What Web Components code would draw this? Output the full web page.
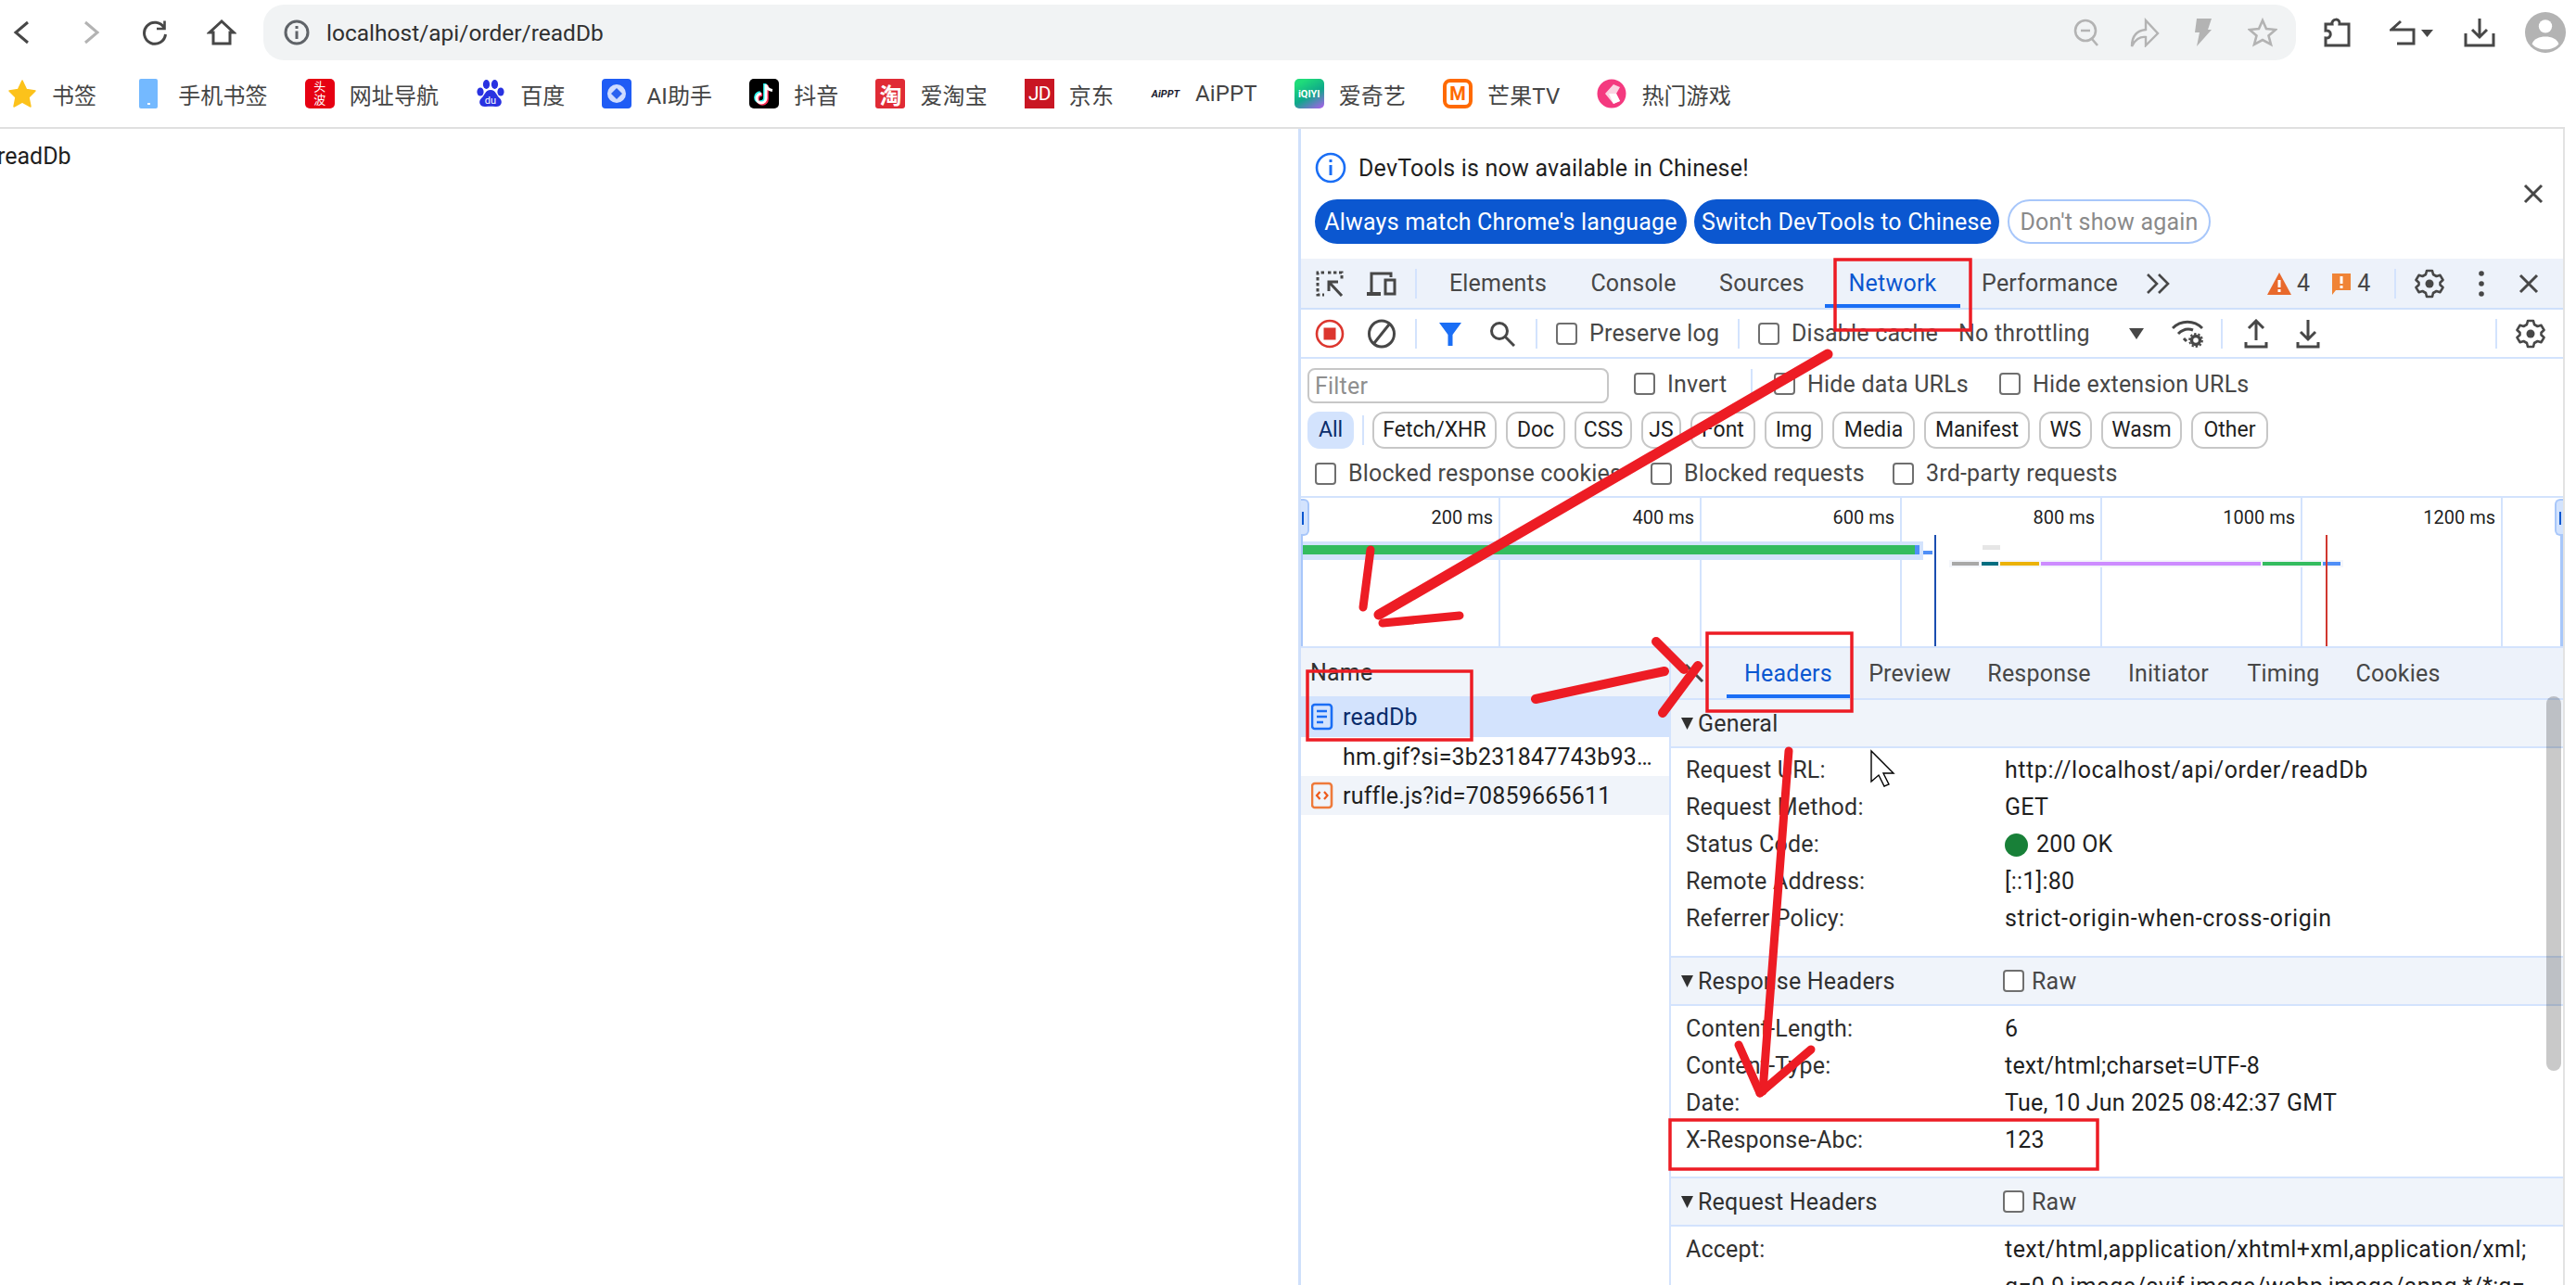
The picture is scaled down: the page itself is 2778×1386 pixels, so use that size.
<!DOCTYPE html>
<html>
<head>
<meta charset="utf-8">
<title>readDb</title>
<style>
    html, body { margin: 0; padding: 0; background: #fff; }
    body {
        width: 2778px;
        height: 1386px;
        position: relative;
        overflow: hidden;
        font-family: Roboto, "Noto Sans CJK SC", sans-serif;
        font-size: 24px;
        color: #1f1f1f;
    }
    .main { display: flex; width: 2766px; height: 1247px; }
    .page-text { flex: 0 0 1400px; padding-top: 14px; text-indent: -3px; line-height: 32px; font-size: 25px; overflow: hidden; }
</style>
</head>
<body>
<browser-toolbar></browser-toolbar>
<bookmark-bar>
    <bookmark-item icon="star">书签</bookmark-item>
    <bookmark-item icon="phone">手机书签</bookmark-item>
    <bookmark-item icon="toutiao">网址导航</bookmark-item>
    <bookmark-item icon="baidu">百度</bookmark-item>
    <bookmark-item icon="aihelp">AI助手</bookmark-item>
    <bookmark-item icon="douyin">抖音</bookmark-item>
    <bookmark-item icon="taobao">爱淘宝</bookmark-item>
    <bookmark-item icon="jd">京东</bookmark-item>
    <bookmark-item icon="aippt">AiPPT</bookmark-item>
    <bookmark-item icon="iqiyi">爱奇艺</bookmark-item>
    <bookmark-item icon="mango">芒果TV</bookmark-item>
    <bookmark-item icon="game">热门游戏</bookmark-item>
</bookmark-bar>
<div class="main">
    <div class="page-text">readDb</div>
    <devtools-panel></devtools-panel>
</div>
<ink-overlay></ink-overlay>

<script>
const G = "#474747";
const L = "#b3b3b3";

// every icon the page uses, drawn at its real pixel size
const ICONS = {
    back: `<svg width="20" height="26" viewBox="0 0 20 26" fill="none" stroke="${G}" stroke-width="3"><path d="M17 2 L4 13 L17 24"/></svg>`,
    forward: `<svg width="20" height="26" viewBox="0 0 20 26" fill="none" stroke="${L}" stroke-width="3"><path d="M3 2 L16 13 L3 24"/></svg>`,
    reload: `<svg width="28" height="28" viewBox="0 0 28 28" fill="none" stroke="${G}" stroke-width="3"><path d="M24 9 A11.5 11.5 0 1 0 25.5 16"/><path d="M24.5 1.5 V10 H16" stroke-width="2.6"/></svg>`,
    home: `<svg width="32" height="28" viewBox="0 0 32 28" fill="none" stroke="${G}" stroke-width="3"><path d="M16 2 L3 14 H7 V26 H25 V14 H29 Z" stroke-linejoin="miter"/></svg>`,
    info: `<svg width="28" height="28" viewBox="0 0 28 28" fill="none" stroke="#5f6368" stroke-width="3"><circle cx="14" cy="14" r="12"/><path d="M14 12.5 V21 M14 7 V10"/></svg>`,
    zoomout: `<svg width="28" height="30" viewBox="0 0 28 30" fill="none" stroke="${L}" stroke-width="2.6"><circle cx="13" cy="13" r="11"/><path d="M8 13 H18 M20 22 L26 29"/></svg>`,
    share: `<svg width="32" height="32" viewBox="0 0 32 32" fill="none" stroke="${L}" stroke-width="2.4"><path d="M2 31 C2 20 7 14 17 13 V3 L30 17 L17 30 V21 C11 20 5 24 2 31 Z"/></svg>`,
    flash: `<svg width="20" height="30" viewBox="0 0 20 30" fill="${L}"><path d="M3 0 H19 L15 12 H19 L3 30 L6 15 H1 Z"/></svg>`,
    staro: `<svg width="32" height="32" viewBox="0 0 32 32" fill="none" stroke="${L}" stroke-width="2.6"><path d="M16 3 L20 12 L30 13 L22.5 19.5 L25 29 L16 24 L7 29 L9.5 19.5 L2 13 L12 12 Z"/></svg>`,
    puzzle: `<svg width="30" height="32" viewBox="0 0 30 32" fill="none" stroke="${G}" stroke-width="3"><path d="M2 7 H9 C8 1 18 0 17 7 H27 V30 H2 V22 C9 23 9 13 2 14 Z"/></svg>`,
    undo: `<svg width="48" height="30" viewBox="0 0 48 30" fill="none" stroke="${G}" stroke-width="3"><path d="M12 3 L2 12 H26 V27 H8"/><path d="M34 12 H47 L40.5 20 Z" fill="${G}" stroke="none"/></svg>`,
    dload: `<svg width="34" height="32" viewBox="0 0 34 32" fill="none" stroke="${G}" stroke-width="3"><path d="M17 1 V20 M9 13 L17 21 L25 13"/><path d="M2 17 V30 H32 V17"/></svg>`,
    avatar: `<svg width="44" height="44" viewBox="0 0 46 46"><circle cx="23" cy="23" r="23" fill="${L}"/><circle cx="23" cy="16" r="7.5" fill="#fff"/><path d="M8 36 C11 25 35 25 38 36 C32 44 14 44 8 36 Z" fill="#fff"/></svg>`,

    star: `<svg width="32" height="32" viewBox="0 0 32 32"><path d="M16 2 L20.5 11.5 L30 13 L23 20 L25 30 L16 25 L7 30 L9 20 L2 13 L11.5 11.5 Z" fill="#fcc21b" stroke="#fcc21b" stroke-width="1.5" stroke-linejoin="round"/></svg>`,
    phone: `<svg width="32" height="32" viewBox="0 0 32 32"><rect x="6" y="0" width="20" height="32" rx="2" fill="#74b9ff"/><rect x="15" y="26" width="3" height="2" fill="#fff"/></svg>`,

    inspect: `<svg width="30" height="28" viewBox="0 0 30 28" fill="none" stroke="${G}" stroke-width="3"><path d="M9 2 H2 V26 H9" stroke-dasharray="3.4 2.6"/><path d="M13 2 H28 V9" stroke-dasharray="3.4 2.6"/><path d="M28 27 L14 12 M14 22 V12 H24"/></svg>`,
    device: `<svg width="32" height="26" viewBox="0 0 32 26" fill="none" stroke="${G}" stroke-width="3"><path d="M5 22 V2 H26 V6"/><path d="M0 24 H15" stroke-width="4"/><rect x="20" y="9" width="10" height="15"/></svg>`,
    record: `<svg width="32" height="32" viewBox="0 0 32 32"><circle cx="16" cy="16" r="14" fill="none" stroke="#dc362e" stroke-width="2.6"/><rect x="9.5" y="9.5" width="13" height="13" fill="#dc362e"/></svg>`,
    clear: `<svg width="32" height="32" viewBox="0 0 32 32" fill="none" stroke="${G}" stroke-width="3"><ellipse cx="16" cy="16" rx="13.5" ry="14"/><path d="M8 26 L24 6"/></svg>`,
    funnel: `<svg width="26" height="26" viewBox="0 0 26 26"><path d="M1 1 H25 L15.5 14 V26 H10.5 V14 Z" fill="#1a6ef5"/></svg>`,
    search: `<svg width="28" height="28" viewBox="0 0 28 28" fill="none" stroke="${G}" stroke-width="3"><circle cx="11" cy="11" r="8.5"/><path d="M17 17 L27 27"/></svg>`,
    caret: `<svg width="16" height="14" viewBox="0 0 16 14"><path d="M0 1 H16 L8 13 Z" fill="${G}"/></svg>`,
    wifi: `<svg width="34" height="30" viewBox="0 0 34 30" fill="none" stroke="${G}" stroke-width="3"><path d="M1 9 C10 0 24 0 33 9 M7 15 C12 10 18 9 23 11 M13 20 L16 23"/><circle cx="26" cy="22" r="4.5" stroke-width="3.4"/><circle cx="26" cy="22" r="7" stroke-width="1.8" stroke-dasharray="2.4 2"/></svg>`,
    upload: `<svg width="26" height="32" viewBox="0 0 26 32" fill="none" stroke="${G}" stroke-width="3"><path d="M13 23 V3 M5 10 L13 2 L21 10"/><path d="M2 25 V30 H24 V25"/></svg>`,
    download: `<svg width="26" height="32" viewBox="0 0 26 32" fill="none" stroke="${G}" stroke-width="3"><path d="M13 1 V21 M5 14 L13 22 L21 14"/><path d="M2 25 V30 H24 V25"/></svg>`,
    gear: `<svg width="32" height="32" viewBox="0 0 32 32" fill="none" stroke="${G}" stroke-width="2.6"><path d="M13 2 H19 L20 6 L23.5 8 L27.5 6.8 L30.5 12 L27.5 14.8 V17.2 L30.5 20 L27.5 25.2 L23.5 24 L20 26 L19 30 H13 L12 26 L8.5 24 L4.5 25.2 L1.5 20 L4.5 17.2 V14.8 L1.5 12 L4.5 6.8 L8.5 8 L12 6 Z" stroke-linejoin="round"/><circle cx="16" cy="16" r="4.5" fill="${G}" stroke="none"/></svg>`,
    dots: `<svg width="8" height="30" viewBox="0 0 8 30" fill="${G}"><circle cx="4" cy="4" r="2.8"/><circle cx="4" cy="15" r="2.8"/><circle cx="4" cy="26" r="2.8"/></svg>`,
    close: `<svg width="22" height="22" viewBox="0 0 22 22" stroke="${G}" stroke-width="3"><path d="M2 2 L20 20 M20 2 L2 20"/></svg>`,
    more: `<svg width="28" height="24" viewBox="0 0 28 24" fill="none" stroke="${G}" stroke-width="2.6"><path d="M2 2 L12 12 L2 22 M14 2 L24 12 L14 22"/></svg>`,
    warn: `<svg width="26" height="24" viewBox="0 0 26 24"><path d="M13 0 L26 24 H0 Z" fill="#e8692c"/><path d="M13 8 V16 M13 18 V21" stroke="#fff" stroke-width="3"/></svg>`,
    issue: `<svg width="22" height="24" viewBox="0 0 22 24"><path d="M1 1 H21 V19 H5 L1 24 Z" fill="#f08436"/><path d="M11 4 V12 M11 14 V17" stroke="#fff" stroke-width="3"/></svg>`,
    infob: `<svg width="34" height="34" viewBox="0 0 34 34" fill="none" stroke="#1a6ef5" stroke-width="2.6"><circle cx="17" cy="17" r="15"/><path d="M17 14 V25 M17 8 V11" stroke-width="3"/></svg>`,
    doc: `<svg width="24" height="30" viewBox="0 0 24 30"><rect x="1" y="2" width="21" height="26" rx="3" fill="none" stroke="#1a6ef5" stroke-width="2.6"/><path d="M6 9 H17 M6 15 H17 M6 21 H13" stroke="#1a6ef5" stroke-width="2.6"/></svg>`,
    script: `<svg width="24" height="30" viewBox="0 0 24 30"><rect x="1" y="2" width="21" height="26" rx="3" fill="none" stroke="#ee7a3b" stroke-width="2.6"/><path d="M9.5 11 L6 15 L9.5 19 M14 11 L17.5 15 L14 19" fill="none" stroke="#ee5a1b" stroke-width="2.2"/></svg>`,
    tri: `<svg width="13" height="13" viewBox="0 0 13 13"><path d="M0 0 H13 L6.5 13 Z" fill="#303030"/></svg>`
};

class TbIcon extends HTMLElement {
    constructor() {
        super();
        this.shadowDOM = this.attachShadow({mode: "open"});
    }

    connectedCallback() {
        this.shadowDOM.innerHTML = `
            <style>
                :host { display: inline-flex; align-items: center; justify-content: center; flex: none; }
                svg { display: block; }
            </style>
            ${ICONS[this.getAttribute("name")]}
        `;
    }
}
customElements.define("tb-icon", TbIcon);

class BrowserToolbar extends HTMLElement {
    constructor() {
        super();
        this.shadowDOM = this.attachShadow({mode: "open"});
    }

    connectedCallback() {
        this.shadowDOM.innerHTML = `
            <style>
                :host { display: flex; align-items: center; height: 70px; background: #fff; }
                .nav { display: flex; align-items: center; width: 284px; padding-left: 13px; box-sizing: border-box; }
                .bar {
                    width: 2192px;
                    height: 60px;
                    border-radius: 22px;
                    background: #f1f3f4;
                    display: flex;
                    align-items: center;
                    box-sizing: border-box;
                    padding-left: 22px;
                }
                .url { margin-left: 18px; flex: 1; color: #303030; font-size: 24.5px; }
                .right { display: flex; align-items: center; }
            </style>
            <div class="nav">
                <tb-icon name="back"></tb-icon>
                <tb-icon name="forward" style="margin-left:56px"></tb-icon>
                <tb-icon name="reload" style="margin-left:44px"></tb-icon>
                <tb-icon name="home" style="margin-left:42px"></tb-icon>
            </div>
            <div class="bar">
                <tb-icon name="info"></tb-icon>
                <div class="url">localhost/api/order/readDb</div>
                <div class="right" style="margin-right:20px">
                    <tb-icon name="zoomout"></tb-icon>
                    <tb-icon name="share" style="margin-left:33px"></tb-icon>
                    <tb-icon name="flash" style="margin-left:37px"></tb-icon>
                    <tb-icon name="staro" style="margin-left:38px"></tb-icon>
                </div>
            </div>
            <div class="right">
                <tb-icon name="puzzle" style="margin-left:30px"></tb-icon>
                <tb-icon name="undo" style="margin-left:41px"></tb-icon>
                <tb-icon name="dload" style="margin-left:32px"></tb-icon>
                <tb-icon name="avatar" style="margin-left:32px"></tb-icon>
            </div>
        `;
    }
}
customElements.define("browser-toolbar", BrowserToolbar);

class BookmarkBar extends HTMLElement {
    constructor() {
        super();
        this.attachShadow({mode: "open"}).innerHTML = `
            <style>
                :host {
                    display: flex;
                    align-items: center;
                    gap: 40px;
                    width: 2758px;
                    height: 62px;
                    padding-left: 8px;
                    padding-bottom: 5px;
                    border-bottom: 2px solid #e0e0e0;
                    background: #fff;
                }
            </style>
            <slot></slot>
        `;
    }
}
customElements.define("bookmark-bar", BookmarkBar);

// favicon faces; text stays real text inside the little squares
const FAVICONS = {
    star: `<tb-icon name="star"></tb-icon>`,
    phone: `<tb-icon name="phone"></tb-icon>`,
    toutiao: `<div class="sq" style="background:#e60012;color:#fff;font-size:13px;line-height:14px;border-radius:5px">头<br>波</div>`,
    baidu: `<svg width="32" height="32" viewBox="0 0 32 32" fill="#2932e1"><ellipse cx="5" cy="14" rx="3.6" ry="4.6"/><ellipse cx="11.5" cy="6" rx="3.6" ry="5"/><ellipse cx="20.5" cy="6" rx="3.6" ry="5"/><ellipse cx="27" cy="14" rx="3.6" ry="4.6"/><path d="M16 12 C10 12 10 18 6 21 C2 25 5 31 11 30 C14 29.5 18 29.5 21 30 C27 31 30 25 26 21 C22 18 22 12 16 12 Z"/><text x="16" y="27" text-anchor="middle" font-size="11" font-family="Roboto" fill="#fff">du</text></svg>`,
    aihelp: `<svg width="32" height="32" viewBox="0 0 32 32"><rect width="32" height="32" rx="4" fill="#1f5cf5"/><circle cx="16" cy="16" r="10" fill="#cfdcff"/><path d="M16 10 L22 16 L16 22 L10 16 Z" fill="#2b62f0"/></svg>`,
    douyin: `<svg width="32" height="32" viewBox="0 0 32 32"><rect width="32" height="32" rx="5" fill="#000"/><path d="M18 6 V21 A5 5 0 1 1 13 16" fill="none" stroke="#25f4ee" stroke-width="3.4" transform="translate(-1.2 -1)"/><path d="M18 6 V21 A5 5 0 1 1 13 16" fill="none" stroke="#fe2c55" stroke-width="3.4" transform="translate(1.2 1)"/><path d="M18 6 V21 A5 5 0 1 1 13 16 M18 7 C19 10 21 12 25 12.5" fill="none" stroke="#fff" stroke-width="3"/></svg>`,
    taobao: `<div class="sq" style="background:#e02b35;color:#fff;font-size:24px;font-weight:700;border-radius:3px">淘</div>`,
    jd: `<div class="sq" style="background:#c91623;color:#fff;font-size:21px;letter-spacing:-1px">JD</div>`,
    aippt: `<div class="sq" style="color:#1a1a2e;font-size:11px;font-weight:700;font-style:italic">AiPPT</div>`,
    iqiyi: `<div class="sq" style="background:linear-gradient(150deg,#1fdc7a 15%,#0fa88a 55%,#b25bf0 100%);color:#fff;font-size:11px;font-weight:700;border-radius:5px">iQIYI</div>`,
    mango: `<div class="sq" style="border:4px solid #ff6a00;box-sizing:border-box;border-radius:8px;color:#ff6a00;font-size:20px;font-weight:700">M</div>`,
    game: `<svg width="32" height="32" viewBox="0 0 32 32"><circle cx="16" cy="16" r="15.5" fill="#f4397f"/><path d="M18 6 L25 9 L21 16 L25 24 L18 27 L9 16 Z" fill="#fbd3e2"/><path d="M13 16 H21 L25 24 L18 27 Z" fill="#fff"/></svg>`
};

class BookmarkItem extends HTMLElement {
    constructor() {
        super();
        this.shadowDOM = this.attachShadow({mode: "open"});
    }

    connectedCallback() {
        this.shadowDOM.innerHTML = `
            <style>
                :host { display: inline-flex; align-items: center; gap: 16px; color: #444; font-size: 24px; letter-spacing: .12px; }
                .ic { width: 32px; height: 32px; display: flex; align-items: center; justify-content: center; letter-spacing: 0; }
                .sq { width: 32px; height: 32px; display: flex; align-items: center; justify-content: center; text-align: center; white-space: nowrap; overflow: hidden; }
            </style>
            <div class="ic">${FAVICONS[this.getAttribute("icon")]}</div>
            <slot></slot>
        `;
    }
}
customElements.define("bookmark-item", BookmarkItem);

class DtSep extends HTMLElement {
    constructor() {
        super();
        this.attachShadow({mode: "open"}).innerHTML = `
            <style>
                :host { display: block; flex: none; width: 2px; height: 32px; background: #d3e3fd; margin: 0 8px; }
            </style>
        `;
    }
}
customElements.define("dt-sep", DtSep);

class DtBtn extends HTMLElement {
    constructor() {
        super();
        this.shadowDOM = this.attachShadow({mode: "open"});
    }

    connectedCallback() {
        this.shadowDOM.innerHTML = `
            <style>
                :host { display: flex; flex: none; width: 56px; align-items: center; justify-content: center; }
            </style>
            <tb-icon name="${this.getAttribute("icon")}"></tb-icon>
        `;
    }
}
customElements.define("dt-btn", DtBtn);

class DtCheck extends HTMLElement {
    constructor() {
        super();
        this.attachShadow({mode: "open"}).innerHTML = `
            <style>
                :host { display: inline-flex; flex: none; align-items: center; gap: var(--check-gap, 13px); color: #474747; white-space: nowrap; }
                .box { width: 19px; height: 20px; border: 2px solid #6f6f6f; border-radius: 4px; background: #fff; flex: none; }
            </style>
            <div class="box"></div>
            <slot></slot>
        `;
    }
}
customElements.define("dt-check", DtCheck);

class DtChip extends HTMLElement {
    constructor() {
        super();
        this.attachShadow({mode: "open"}).innerHTML = `
            <style>
                :host {
                    display: flex;
                    flex: none;
                    align-items: center;
                    justify-content: center;
                    box-sizing: border-box;
                    height: 40px;
                    border: 2px solid #c7c7c7;
                    border-radius: 13px;
                    color: #1f1f1f;
                    background: #fff;
                    font-size: 23px;
                    letter-spacing: 0;
                }
                :host([active]) { border-color: #d3e3fd; background: #d3e3fd; color: #0a2c6b; }
            </style>
            <slot></slot>
        `;
    }
}
customElements.define("dt-chip", DtChip);

class DtTab extends HTMLElement {
    constructor() {
        super();
        this.attachShadow({mode: "open"}).innerHTML = `
            <style>
                :host {
                    display: flex;
                    flex: none;
                    align-items: center;
                    justify-content: center;
                    box-sizing: border-box;
                    height: 100%;
                    padding-top: 4px;
                    color: #474747;
                    border-bottom: 4px solid transparent;
                }
                :host([selected]) { color: #0b57d0; border-bottom-color: #1a6ef5; }
            </style>
            <slot></slot>
        `;
    }
}
customElements.define("dt-tab", DtTab);

class DtInfobar extends HTMLElement {
    constructor() {
        super();
        this.attachShadow({mode: "open"}).innerHTML = `
            <style>
                :host { display: flex; height: 140px; box-sizing: border-box; padding-left: 15px; align-items: center; }
                .col { flex: 1; display: flex; flex-direction: column; gap: 17px; padding-top: 9px; }
                .msg { display: flex; align-items: center; gap: 13px; height: 34px; color: #1f1f1f; }
                .btns { display: flex; gap: 8px; }
                .btn {
                    height: 48px;
                    box-sizing: border-box;
                    border-radius: 24px;
                    display: flex;
                    align-items: center;
                    justify-content: center;
                    background: #0b57d0;
                    color: #fff;
                    white-space: nowrap;
                }
                .ghost { background: #fff; color: #8a8a8a; border: 2px solid #a8c7fa; }
                .x { width: 22px; margin-right: 21px; }
            </style>
            <div class="col">
                <div class="msg"><tb-icon name="infob"></tb-icon><span>DevTools is now available in Chinese!</span></div>
                <div class="btns">
                    <div class="btn" style="width:401px">Always match Chrome's language</div>
                    <div class="btn" style="width:329px">Switch DevTools to Chinese</div>
                    <div class="btn ghost" style="width:219px;margin-left:1px">Don't show again</div>
                </div>
            </div>
            <tb-icon class="x" name="close"></tb-icon>
        `;
    }
}
customElements.define("dt-infobar", DtInfobar);

class DtMainTabs extends HTMLElement {
    constructor() {
        super();
        this.attachShadow({mode: "open"}).innerHTML = `
            <style>
                :host {
                    display: flex;
                    align-items: center;
                    height: 53px;
                    padding-left: 3px;
                    background: #edf2fa;
                    border-bottom: 2px solid #cfe0fb;
                }
                .num { color: #474747; margin-left: 6px; }
                .badge { display: flex; align-items: center; }
            </style>
            <dt-btn icon="inspect"></dt-btn>
            <dt-btn icon="device"></dt-btn>
            <dt-sep></dt-sep>
            <dt-tab style="width:151px;margin-left:4px">Elements</dt-tab>
            <dt-tab style="width:141px">Console</dt-tab>
            <dt-tab style="width:136px">Sources</dt-tab>
            <dt-tab selected style="width:146px">Network</dt-tab>
            <dt-tab style="width:193px">Performance</dt-tab>
            <tb-icon name="more" style="margin-left:7px"></tb-icon>
            <div class="badge" style="margin-left:103px"><tb-icon name="warn"></tb-icon><span class="num">4</span></div>
            <div class="badge" style="margin-left:23px"><tb-icon name="issue"></tb-icon><span class="num">4</span></div>
            <dt-sep style="margin-left:25px"></dt-sep>
            <dt-btn icon="gear"></dt-btn>
            <dt-btn icon="dots"></dt-btn>
            <dt-btn icon="close" style="width:46px"></dt-btn>
        `;
    }
}
customElements.define("dt-main-tabs", DtMainTabs);

class DtNetToolbar extends HTMLElement {
    constructor() {
        super();
        this.attachShadow({mode: "open"}).innerHTML = `
            <style>
                :host {
                    display: flex;
                    align-items: center;
                    height: 51px;
                    padding-left: 3px;
                    border-bottom: 2px solid #d3e3fd;
                }
                .txt { color: #474747; white-space: nowrap; }
            </style>
            <dt-btn icon="record"></dt-btn>
            <dt-btn icon="clear"></dt-btn>
            <dt-sep></dt-sep>
            <dt-btn icon="funnel"></dt-btn>
            <dt-btn icon="search"></dt-btn>
            <dt-sep></dt-sep>
            <dt-check style="width:188px;margin-left:12px">Preserve log</dt-check>
            <dt-sep></dt-sep>
            <dt-check style="width:216px;margin-left:12px">Disable cache</dt-check>
            <span class="txt" style="width:184px">No throttling</span>
            <tb-icon name="caret"></tb-icon>
            <tb-icon name="wifi" style="margin-left:30px"></tb-icon>
            <dt-sep style="margin-left:19px"></dt-sep>
            <dt-btn icon="upload"></dt-btn>
            <dt-btn icon="download"></dt-btn>
            <dt-sep style="margin-left:174px"></dt-sep>
            <dt-btn icon="gear"></dt-btn>
        `;
    }
}
customElements.define("dt-net-toolbar", DtNetToolbar);

class DtFilterBar extends HTMLElement {
    constructor() {
        super();
        this.attachShadow({mode: "open"}).innerHTML = `
            <style>
                :host {
                    display: block;
                    height: 148px;
                    padding-left: 7px;
                    border-bottom: 2px solid #d3e3fd;
                }
                .row { display: flex; align-items: center; }
                .r1 { height: 54px; }
                .r2 { height: 45px; gap: 10px; }
                .r3 { height: 49px; margin-left: 8px; }
                .filter {
                    width: 325px;
                    height: 38px;
                    box-sizing: border-box;
                    border: 2px solid #c7c7c7;
                    border-radius: 8px;
                    padding-left: 6px;
                    color: #8f8f8f;
                    line-height: 36px;
                    flex: none;
                    margin-top: 3px;
                }
                .vsep { width: 2px; height: 32px; background: #d3e3fd; flex: none; margin-right: -2px; }
            </style>
            <div class="row r1">
                <div class="filter">Filter</div>
                <dt-check style="width:126px;margin-left:27px">Invert</dt-check>
                <div class="vsep"></div>
                <dt-check style="width:243px;margin-left:25px">Hide data URLs</dt-check>
                <dt-check>Hide extension URLs</dt-check>
            </div>
            <div class="row r2">
                <dt-chip active style="width:50px">All</dt-chip>
                <div class="vsep" style="margin-left:-1px;margin-right:-1px"></div>
                <dt-chip style="width:134px">Fetch/XHR</dt-chip>
                <dt-chip style="width:64px">Doc</dt-chip>
                <dt-chip style="width:62px">CSS</dt-chip>
                <dt-chip style="width:43px">JS</dt-chip>
                <dt-chip style="width:70px">Font</dt-chip>
                <dt-chip style="width:63px">Img</dt-chip>
                <dt-chip style="width:89px">Media</dt-chip>
                <dt-chip style="width:114px">Manifest</dt-chip>
                <dt-chip style="width:57px">WS</dt-chip>
                <dt-chip style="width:87px">Wasm</dt-chip>
                <dt-chip style="width:83px">Other</dt-chip>
            </div>
            <div class="row r3">
                <dt-check style="width:362px">Blocked response cookies</dt-check>
                <dt-check style="width:261px">Blocked requests</dt-check>
                <dt-check>3rd-party requests</dt-check>
            </div>
        `;
    }
}
customElements.define("dt-filter-bar", DtFilterBar);

class DtOverview extends HTMLElement {
    constructor() {
        super();
        this.shadowDOM = this.attachShadow({mode: "open"});
    }

    connectedCallback() {
        const x0 = 1403;
        const y0 = 537;
        const box = (x1, x2, y1, y2, color) =>
            `<i style="left:${x1 - x0}px;width:${x2 - x1}px;top:${y1 - y0}px;height:${y2 - y1}px;background:${color}"></i>`;
        const grid = [1616, 1833, 2049, 2265, 2481, 2697];
        const labels = ["200 ms", "400 ms", "600 ms", "800 ms", "1000 ms", "1200 ms"];
        let marks = "";
        grid.forEach((x, i) => {
            marks += box(x, x + 2, 537, 697, "#d3e3fd");
            marks += `<span class="lb" style="right:${2764 - x + 6}px">${labels[i]}</span>`;
        });
        marks += box(1403, 2074, 584, 604, "#d3e3fd");
        marks += box(1405, 2065, 588, 598, "#34bc5f");
        marks += box(2065, 2070, 588, 598, "#4f8ff7");
        marks += box(2074, 2084, 594, 598, "#4f8ff7");
        marks += box(2138, 2157, 588, 593, "#e6e6e6");
        marks += box(2102, 2527, 604, 612, "#f4f6fb");
        marks += box(2105, 2134, 606, 610, "#a8a8a8");
        marks += box(2137, 2155, 606, 610, "#006d80");
        marks += box(2157, 2199, 606, 610, "#ebb207");
        marks += box(2201, 2438, 606, 610, "#cd8cff");
        marks += box(2440, 2503, 606, 610, "#34bc5f");
        marks += box(2505, 2524, 606, 610, "#4f8ff7");
        marks += box(2086, 2088, 577, 697, "#1a4db0");
        marks += box(2508, 2510, 577, 697, "#d0372f");
        marks += box(1403, 1405, 570, 697, "#a8c7fa");
        marks += box(2761, 2764, 570, 697, "#a8c7fa");
        this.shadowDOM.innerHTML = `
            <style>
                :host {
                    display: block;
                    position: relative;
                    height: 160px;
                    border-bottom: 2px solid #d3e3fd;
                    overflow: hidden;
                    font-size: 20px;
                    letter-spacing: 0;
                    color: #1f1f1f;
                }
                i { position: absolute; display: block; }
                .lb { position: absolute; top: 9px; line-height: 24px; white-space: nowrap; }
                .hd {
                    position: absolute;
                    top: 1px;
                    width: 7px;
                    height: 36px;
                    background: #d3e3fd;
                    border: 2px solid #a8c7fa;
                }
                .hd::after { content: ""; position: absolute; top: 12px; left: 3px; width: 2px; height: 14px; background: #0b57d0; }
                .l { left: -2px; border-left: 0; border-radius: 0 6px 6px 0; width: 9px; }
                .r { right: 0; border-right: 0; border-radius: 6px 0 0 6px; }
            </style>
            ${marks}
            <div class="hd l"></div>
            <div class="hd r"></div>
        `;
    }
}
customElements.define("dt-overview", DtOverview);

class DtNameRow extends HTMLElement {
    constructor() {
        super();
        this.shadowDOM = this.attachShadow({mode: "open"});
    }

    connectedCallback() {
        const icon = this.getAttribute("icon");
        this.shadowDOM.innerHTML = `
            <style>
                :host {
                    display: flex;
                    align-items: center;
                    height: 42px;
                    padding-left: 10px;
                    gap: 9px;
                    white-space: nowrap;
                    color: #1f1f1f;
                }
                :host([selected]) { background: #d3e3fd; color: #0a2c6b; height: 44px; }
                :host([stripe]) { background: #f0f4fa; }
                .ic { width: 26px; flex: none; display: flex; justify-content: center; }
            </style>
            <div class="ic">${icon ? `<tb-icon name="${icon}"></tb-icon>` : ""}</div>
            <slot></slot>
        `;
    }
}
customElements.define("dt-name-row", DtNameRow);

class DtSection extends HTMLElement {
    constructor() {
        super();
        this.shadowDOM = this.attachShadow({mode: "open"});
    }

    connectedCallback() {
        const raw = this.hasAttribute("raw");
        this.shadowDOM.innerHTML = `
            <style>
                :host { display: block; }
                :host([topline]) .head { border-top: 2px solid #d3e3fd; }
                :host([topline]) .body { padding-top: 5px; }
                .head {
                    display: flex;
                    align-items: center;
                    height: 50px;
                    background: #f0f4fa;
                    border-bottom: 2px solid #d3e3fd;
                    padding-left: 11px;
                    color: #303030;
                }
                .title { display: flex; align-items: center; gap: 5px; width: 347px; flex: none; white-space: nowrap; }
                .body { padding-top: 4px; }
            </style>
            <div class="head">
                <div class="title"><tb-icon name="tri"></tb-icon>${this.getAttribute("title")}</div>
                ${raw ? `<dt-check style="--check-gap:8px">Raw</dt-check>` : ""}
            </div>
            <div class="body"><slot></slot></div>
        `;
    }
}
customElements.define("dt-section", DtSection);

class DtRow extends HTMLElement {
    constructor() {
        super();
        this.shadowDOM = this.attachShadow({mode: "open"});
    }

    connectedCallback() {
        this.shadowDOM.innerHTML = `
            <style>
                :host { display: flex; padding-left: 16px; line-height: 40px; color: #1f1f1f; white-space: nowrap; }
                .k { width: 344px; flex: none; color: #303030; letter-spacing: .2px; }
                .v { display: flex; align-items: center; }
            </style>
            <div class="k">${this.getAttribute("name")}</div>
            <div class="v"><slot></slot></div>
        `;
    }
}
customElements.define("dt-row", DtRow);

class DtDetails extends HTMLElement {
    constructor() {
        super();
        this.attachShadow({mode: "open"}).innerHTML = `
            <style>
                :host {
                    display: flex;
                    flex-direction: column;
                    flex: 1;
                    min-width: 0;
                    position: relative;
                    overflow: hidden;
                    border-left: 2px solid #d3e3fd;
                }
                .tabs {
                    display: flex;
                    align-items: stretch;
                    height: 54px;
                    flex: none;
                    background: #edf2fa;
                    border-bottom: 2px solid #d3e3fd;
                }
                .x { width: 60px; flex: none; display: flex; align-items: center; justify-content: center; padding-right: 10px; box-sizing: border-box; }
                .scroll { flex: 1; overflow: hidden; }
                .gap { height: 20px; }
                .thumb {
                    position: absolute;
                    top: 52px;
                    right: 2px;
                    width: 16px;
                    height: 404px;
                    border-radius: 8px;
                    background: rgba(0,0,0,.21);
                }
                .dot { width: 25px; height: 25px; border-radius: 50%; background: #188038; margin-right: 9px; }
            </style>
            <div class="tabs">
                <div class="x"><tb-icon name="close"></tb-icon></div>
                <dt-tab selected style="width:133px">Headers</dt-tab>
                <dt-tab style="width:129px">Preview</dt-tab>
                <dt-tab style="width:150px">Response</dt-tab>
                <dt-tab style="width:129px">Initiator</dt-tab>
                <dt-tab style="width:119px">Timing</dt-tab>
                <dt-tab style="width:128px">Cookies</dt-tab>
            </div>
            <div class="scroll">
                <dt-section title="General">
                    <dt-row name="Request URL:" style="letter-spacing:.57px">http://localhost/api/order/readDb</dt-row>
                    <dt-row name="Request Method:">GET</dt-row>
                    <dt-row name="Status Code:"><span class="dot"></span>200 OK</dt-row>
                    <dt-row name="Remote Address:">[::1]:80</dt-row>
                    <dt-row name="Referrer Policy:" style="letter-spacing:.7px">strict-origin-when-cross-origin</dt-row>
                </dt-section>
                <div class="gap"></div>
                <dt-section title="Response Headers" raw topline>
                    <dt-row name="Content-Length:">6</dt-row>
                    <dt-row name="Content-Type:">text/html;charset=UTF-8</dt-row>
                    <dt-row name="Date:">Tue, 10 Jun 2025 08:42:37 GMT</dt-row>
                    <dt-row name="X-Response-Abc:">123</dt-row>
                </dt-section>
                <div class="gap" style="height:19px"></div>
                <dt-section title="Request Headers" raw topline>
                    <dt-row name="Accept:" style="letter-spacing:.45px">text/html,application/xhtml+xml,application/xml;</dt-row>
                    <dt-row name="" style="letter-spacing:.45px">q=0.9,image/avif,image/webp,image/apng,*/*;q=</dt-row>
                </dt-section>
            </div>
            <div class="thumb"></div>
        `;
    }
}
customElements.define("dt-details", DtDetails);

class DevtoolsPanel extends HTMLElement {
    constructor() {
        super();
        this.attachShadow({mode: "open"}).innerHTML = `
            <style>
                :host {
                    display: flex;
                    flex-direction: column;
                    flex: 1;
                    min-width: 0;
                    border-left: 3px solid #cfe0fb;
                    border-right: 2px solid #e3e3e3;
                    background: #fff;
                    height: 1247px;
                    overflow: hidden;
                    font-size: 25px;
                    letter-spacing: .2px;
                }
                .split { display: flex; flex: 1; min-height: 0; }
                .names { width: 397px; flex: none; }
                .name-head { height: 52px; background: #f0f4fa; display: flex; align-items: center; padding-left: 10px; color: #303030; }
            </style>
            <dt-infobar></dt-infobar>
            <dt-main-tabs></dt-main-tabs>
            <dt-net-toolbar></dt-net-toolbar>
            <dt-filter-bar></dt-filter-bar>
            <dt-overview></dt-overview>
            <div class="split">
                <div class="names">
                    <div class="name-head">Name</div>
                    <dt-name-row selected icon="doc">readDb</dt-name-row>
                    <dt-name-row>hm.gif?si=3b231847743b93…</dt-name-row>
                    <dt-name-row stripe icon="script">ruffle.js?id=70859665611</dt-name-row>
                </div>
                <dt-details></dt-details>
            </div>
        `;
    }
}
customElements.define("devtools-panel", DevtoolsPanel);

// hand-drawn annotation layer on top of the screenshot
class InkOverlay extends HTMLElement {
    constructor() {
        super();
        this.attachShadow({mode: "open"}).innerHTML = `
            <style>
                :host { position: absolute; left: 0; top: 0; width: 2778px; height: 1386px; pointer-events: none; }
                svg { display: block; }
            </style>
            <svg width="2778" height="1386" viewBox="0 0 2778 1386" fill="none" stroke="#ed1c24">
                <g stroke-width="3.5">
                    <rect x="1979" y="280" width="146" height="76"/>
                    <rect x="1410" y="724" width="177" height="74"/>
                    <rect x="1841" y="683" width="156" height="84"/>
                    <rect x="1801" y="1208" width="461" height="53"/>
                </g>
                <g stroke-width="11" stroke-linecap="round">
                    <path d="M1971 382 L1487 663"/>
                    <path d="M1478 593 L1470 655" stroke-width="9"/>
                    <path d="M1491 672 L1574 664" stroke-width="9"/>
                    <path d="M1656 754 L1795 724" stroke-width="10"/>
                    <path d="M1786 692 L1816 722" stroke-width="10"/>
                    <path d="M1831 718 L1793 769" stroke-width="10"/>
                    <path d="M1929 810 L1901 1177" stroke-width="9"/>
                    <path d="M1875 1127 L1898 1179" stroke-width="9"/>
                    <path d="M1953 1132 L1898 1179" stroke-width="9"/>
                </g>
                <path d="M2018 810 V843 L2026 836 L2032 848 L2037 846 L2031 834 L2042 834 Z" fill="#fff" stroke="#000" stroke-width="1.4"/>
            </svg>
        `;
    }
}
customElements.define("ink-overlay", InkOverlay);
</script>
</body>
</html>
